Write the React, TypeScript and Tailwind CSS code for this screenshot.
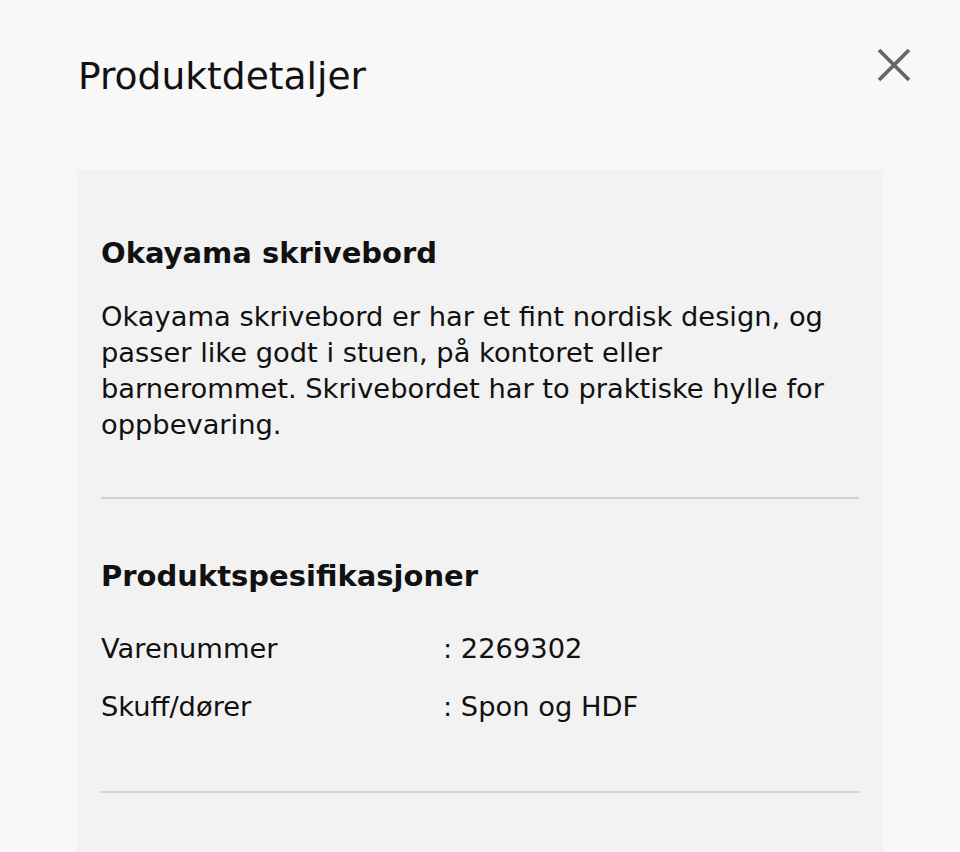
import React from "react";

export default function App() {
  return (
    <div
      className="w-[960px] h-[852px] overflow-hidden bg-[#f8f8f8] text-[#111111]"
      style={{ fontFamily: "'DejaVu Sans', sans-serif" }}
    >
      <div className="flex items-start justify-between pl-[78px] pr-[49px] pt-[54px] h-[170px]">
        <h1 className="text-[37.6px] leading-[44px] font-normal">Produktdetaljer</h1>
        <button className="mt-[-6px] w-[34px] h-[34px] flex items-center justify-center" aria-label="Lukk">
          <svg width="34" height="34" viewBox="0 0 34 34" fill="none">
            <path d="M2 2 L32 32 M32 2 L2 32" stroke="#666666" strokeWidth="3.8" strokeLinecap="butt" />
          </svg>
        </button>
      </div>
      <div className="ml-[77px] w-[806px] h-[682px] bg-[#f2f2f2] px-[24px]">
        <section className="pt-[64px] pb-[54px]">
          <h2 className="text-[29px] leading-[38px] font-bold">Okayama skrivebord</h2>
          <p className="mt-[27px] text-[27.3px] leading-[36px] font-normal">
            Okayama skrivebord er har et fint nordisk design, og passer like godt i stuen, på kontoret eller
            barnerommet. Skrivebordet har to praktiske hylle for oppbevaring.
          </p>
        </section>
        <div className="h-[2px] bg-[#d2d2d2]" />
        <section className="pt-[58px] pb-[66px]">
          <h2 className="text-[29px] leading-[38px] font-bold">Produktspesifikasjoner</h2>
          <div className="mt-[36px] flex flex-col gap-[22px] text-[27.3px] leading-[36px]">
            <div className="flex">
              <span className="w-[342px]">Varenummer</span>
              <span>: 2269302</span>
            </div>
            <div className="flex">
              <span className="w-[342px]">Skuff/dører</span>
              <span>: Spon og HDF</span>
            </div>
          </div>
        </section>
        <div className="h-[2px] bg-[#d2d2d2]" />
      </div>
    </div>
  );
}
